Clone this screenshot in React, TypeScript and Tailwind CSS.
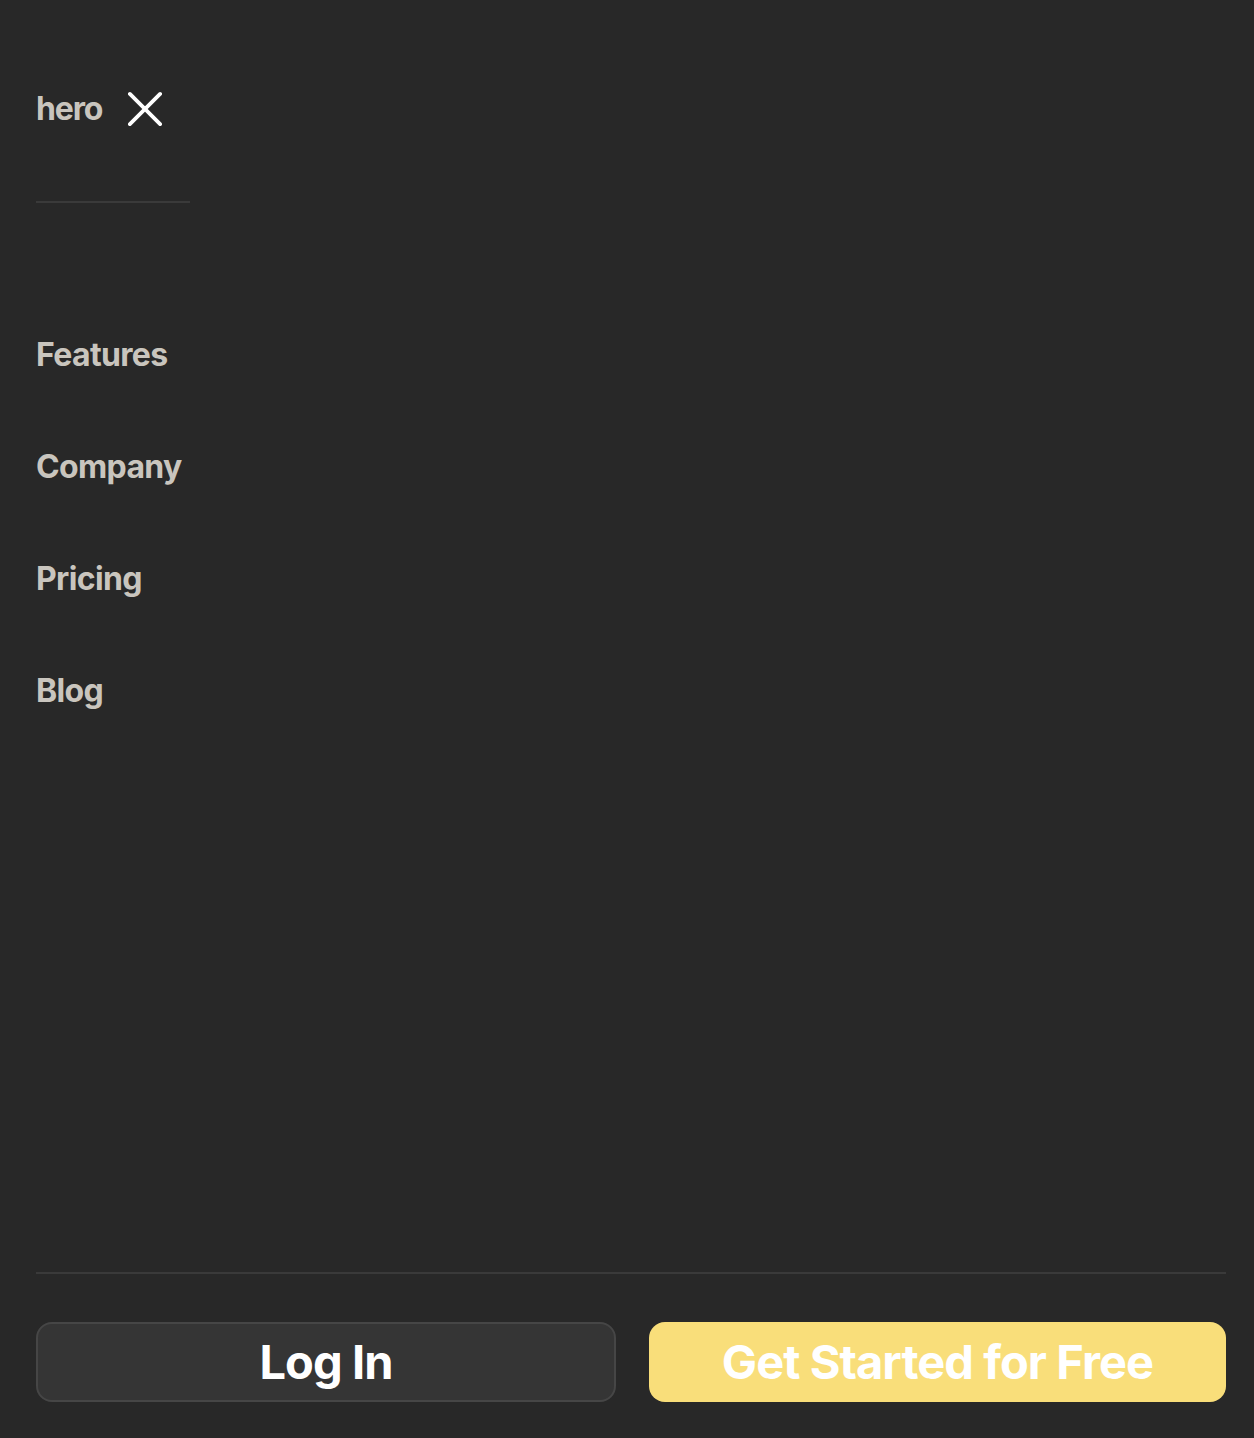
export default function App() {
  const links = ['Features', 'Company', 'Pricing', 'Blog'];

  return (
    <div className="flex min-h-[1438px] flex-col bg-[#282828] pl-9 pr-7 font-['Inter',sans-serif]">
      {/* Header */}
      <div className="flex items-center gap-[26px] pt-[89px]">
        <span className="text-[32px] font-bold leading-[40px] tracking-[-0.035em] text-[#c9c5be]">hero</span>
        <button className="flex h-[34px] w-[34px] items-center justify-center">
          <svg width="36" height="36" viewBox="0 0 36 36" fill="none">
            <path d="M2 2l32 32M34 2L2 34" stroke="#ffffff" strokeWidth="4" strokeLinecap="round" />
          </svg>
        </button>
      </div>
      <div className="mt-[72px] h-[2px] w-[154px] bg-[#3a3a3a]" />

      {/* Nav links */}
      <nav className="mt-[132px] flex flex-col gap-[72px]">
        {links.map((l) => (
          <a key={l} className="text-[32px] font-bold leading-[40px] tracking-[-0.02em] text-[#c9c5be]">
            {l}
          </a>
        ))}
      </nav>

      <div className="flex-1" />

      {/* Footer actions */}
      <div className="h-[2px] bg-[#3a3a3a]" />
      <div className="mt-12 grid grid-cols-[580px_1fr] gap-[33px] pb-9">
        <button className="flex h-20 items-center justify-center rounded-2xl border-2 border-[#464646] bg-[#353535] text-[47px] font-bold tracking-[-0.02em] text-white">
          Log In
        </button>
        <button className="flex h-20 items-center justify-center rounded-2xl bg-[#f9de7a] text-[47px] font-bold tracking-[-0.02em] text-white">
          Get Started for Free
        </button>
      </div>
    </div>
  );
}
